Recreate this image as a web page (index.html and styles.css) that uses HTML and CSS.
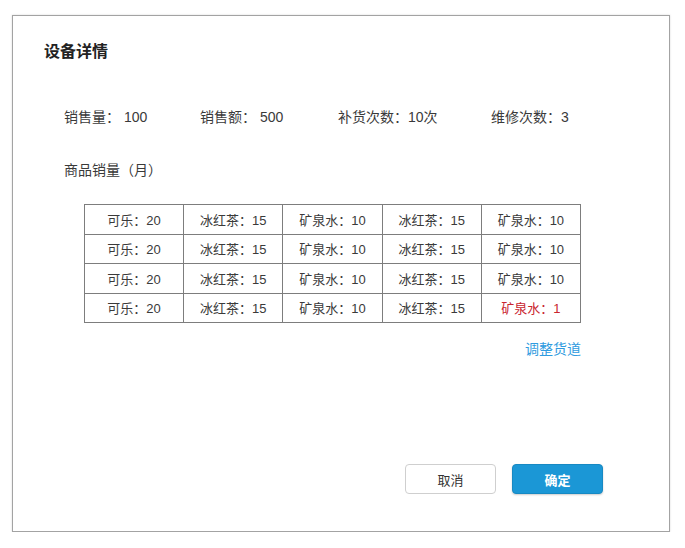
FILE: index.html
```html
<!DOCTYPE html>
<html lang="zh-CN">
<head>
<meta charset="utf-8">
<title>设备详情</title>
<link rel="stylesheet" href="styles.css">
</head>
<body>
<div class="dialog">
  <h2 class="title">设备详情</h2>
  <div class="stats">
    <span class="stat s1">销售量： 100</span>
    <span class="stat s2">销售额： 500</span>
    <span class="stat s3">补货次数：10次</span>
    <span class="stat s4">维修次数：3</span>
  </div>
  <div class="section-label">商品销量（月）</div>
  <div class="goods">
    <table class="grid">
      <tr><td>可乐：20</td><td>冰红茶：15</td><td>矿泉水：10</td><td>冰红茶：15</td><td>矿泉水：10</td></tr>
      <tr><td>可乐：20</td><td>冰红茶：15</td><td>矿泉水：10</td><td>冰红茶：15</td><td>矿泉水：10</td></tr>
      <tr><td>可乐：20</td><td>冰红茶：15</td><td>矿泉水：10</td><td>冰红茶：15</td><td>矿泉水：10</td></tr>
      <tr><td>可乐：20</td><td>冰红茶：15</td><td>矿泉水：10</td><td>冰红茶：15</td><td class="low">矿泉水：1</td></tr>
    </table>
    <div class="link-row"><a class="link" href="#">调整货道</a></div>
  </div>
  <div class="actions">
    <button class="btn btn-cancel">取消</button>
    <button class="btn btn-ok">确定</button>
  </div>
</div>
</body>
</html>
```

FILE: styles.css
```css
html, body {
  margin: 0;
  padding: 0;
  background: #ffffff;
}
body {
  font-family: "Liberation Sans", "Noto Sans CJK SC", sans-serif;
  color: #333333;
}
.dialog {
  box-sizing: border-box;
  margin: 15px 0 0 12px;
  width: 658px;
  height: 517px;
  border: 1px solid #a3a3a3;
  box-shadow: 0 0 2px rgba(0,0,0,0.15);
  padding: 25px 0 0 31px;
  display: flex;
  flex-direction: column;
}
.title {
  margin: 0;
  font-size: 16px;
  line-height: 22px;
  font-weight: bold;
  color: #222222;
}
.stats {
  display: flex;
  margin: 44px 0 0 20px;
  font-size: 14px;
  line-height: 20px;
  color: #3a3a3a;
}
.stat { white-space: nowrap; }
.s1 { width: 136px; }
.s2 { width: 138px; }
.s3 { width: 153px; }
.section-label {
  margin: 33px 0 0 20px;
  font-size: 14px;
  line-height: 20px;
  color: #3a3a3a;
}
.goods {
  margin: 24px 0 0 40px;
  width: 497px;
}
.grid {
  border-collapse: collapse;
  width: 497px;
  table-layout: fixed;
}
.grid td {
  border: 1px solid #7d7d7d;
  height: 28.5px;
  padding: 0;
  text-align: center;
  font-size: 13px;
  color: #3a3a3a;
}
.grid td.low { color: #c9252f; }
.link-row {
  display: flex;
  justify-content: flex-end;
  margin-top: 16px;
}
.link {
  font-size: 14px;
  line-height: 20px;
  color: #2f9be0;
  text-decoration: none;
}
.actions {
  display: flex;
  gap: 16px;
  margin: 105px 0 0 361px;
}
.btn {
  box-sizing: border-box;
  width: 91px;
  height: 30px;
  border-radius: 4px;
  font-family: "Liberation Sans", "Noto Sans CJK SC", sans-serif;
  font-size: 13px;
  cursor: pointer;
}
.btn-cancel {
  background: #ffffff;
  border: 1px solid #cfcfcf;
  color: #333333;
}
.btn-ok {
  background: #1b97d6;
  border: 1px solid #1789c3;
  color: #ffffff;
  font-weight: bold;
  box-shadow: 0 1px 2px rgba(0,0,0,0.2);
}
```
